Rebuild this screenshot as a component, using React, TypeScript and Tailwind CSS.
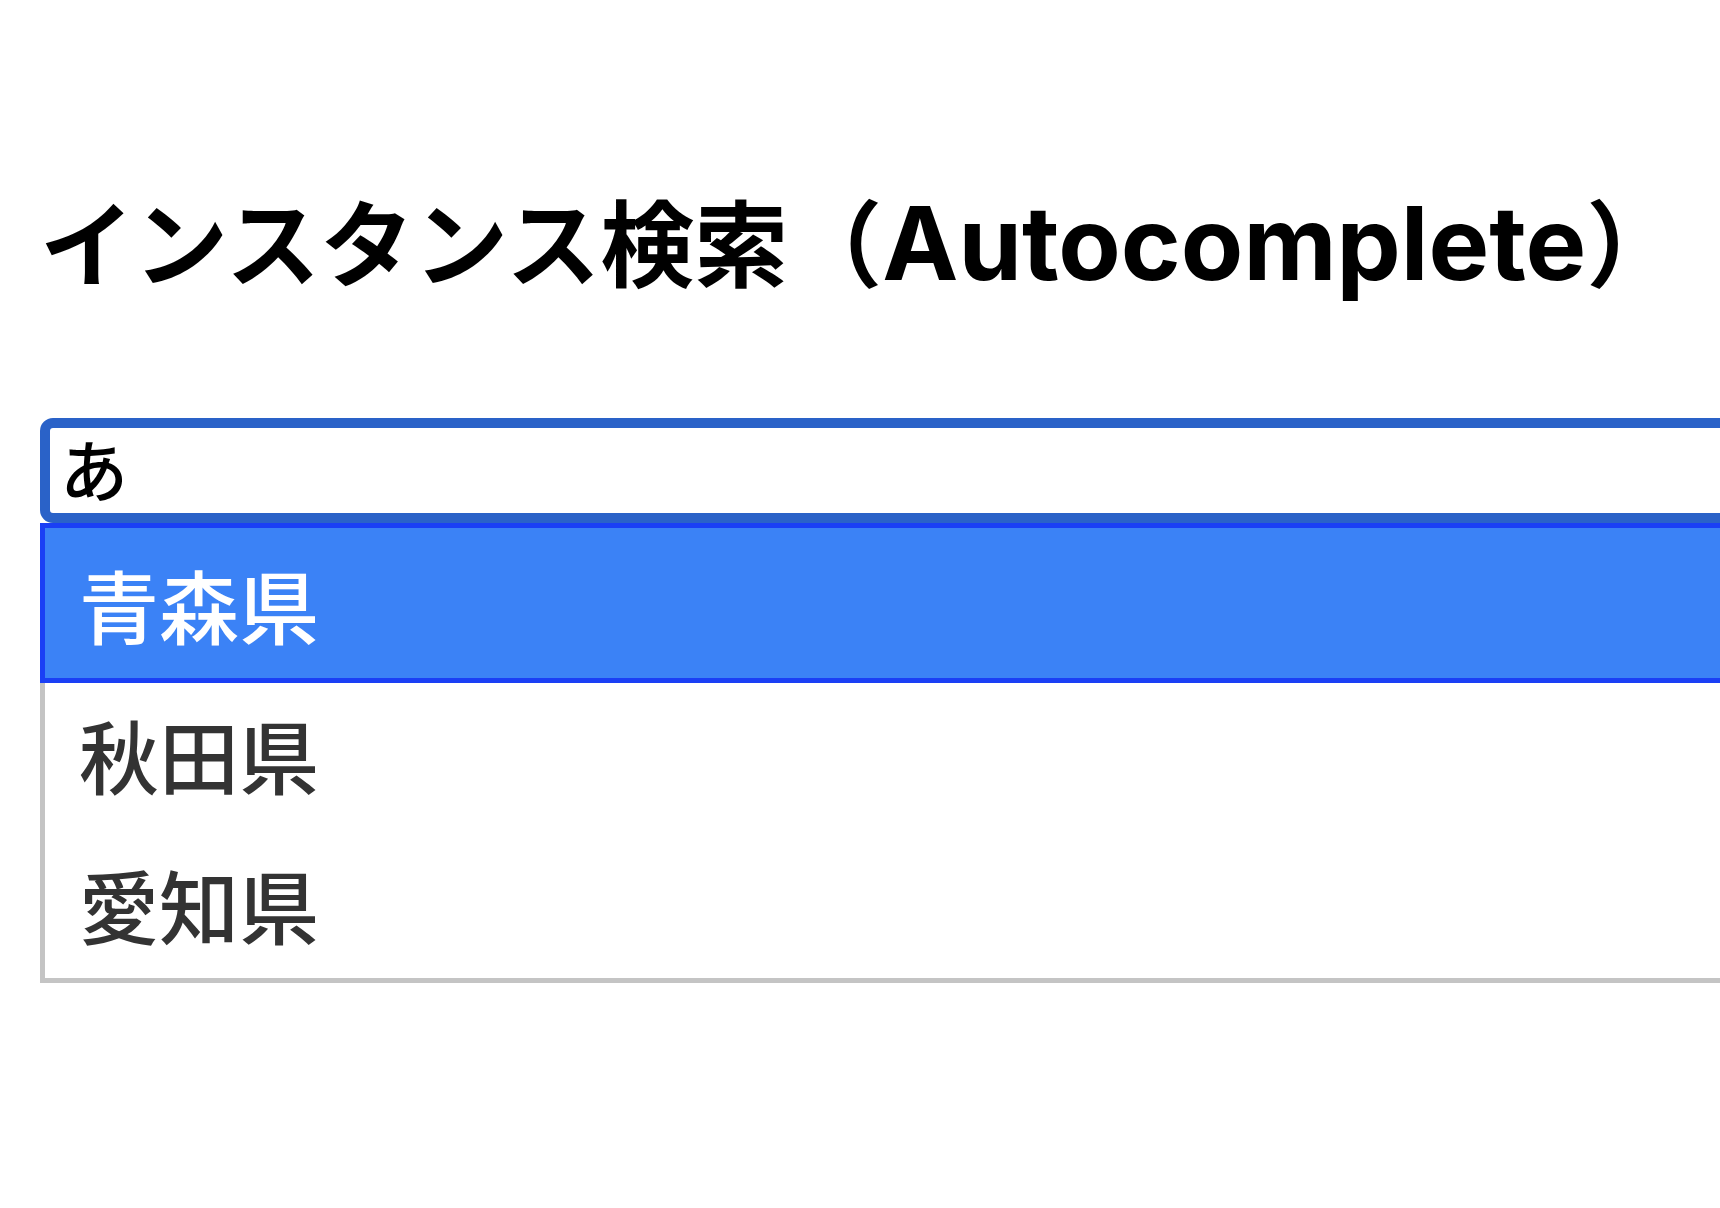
import React from "react";

const items = ["青森県", "秋田県", "愛知県"];

export default function App() {
  return (
    <div
      className="w-full h-[1208px] overflow-hidden bg-white pl-[40px]"
      style={{ fontFamily: '"Noto Sans CJK JP", sans-serif' }}
    >
      <h1
        className="mt-[192px] text-[94px] leading-none font-bold text-black whitespace-nowrap"
        style={{ fontFamily: 'Inter, "Noto Sans CJK JP", sans-serif' }}
      >
        インスタンス検索（<span className="text-[102px] leading-none">Autocomplete</span>）
      </h1>
      <div className="mt-[124px] w-[1760px]">
        <input
          readOnly
          value="あ"
          className="block w-full h-[105px] border-[10px] border-[#2a62c8] rounded-[13px] bg-white pl-[10px] pb-[6px] text-[68px] font-medium text-black outline-none"
          style={{ fontFamily: '"Noto Sans CJK JP", sans-serif' }}
        />
        <ul className="border-[5px] border-[#c4c4c4] bg-white">
          {items.map((name, i) => (
            <li
              key={name}
              className={
                i === 0
                  ? "relative z-10 h-[150px] flex items-center pl-[34px] text-[80px] leading-none font-medium text-white bg-[#3b82f6] outline-[5px] outline-solid outline-[#1a3ff5]"
                  : "h-[150px] flex items-center pl-[34px] text-[80px] leading-none font-medium text-[#333333]"
              }
            >
              {name}
            </li>
          ))}
        </ul>
      </div>
    </div>
  );
}
